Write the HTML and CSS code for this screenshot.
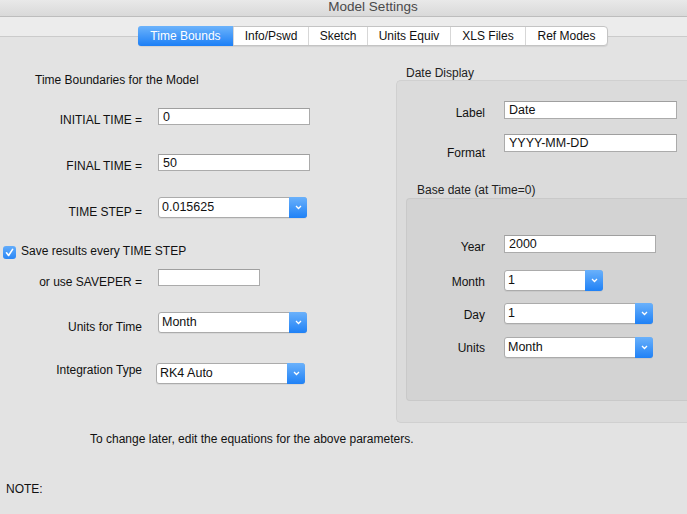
FILE: index.html
```html
<!DOCTYPE html>
<html>
<head>
<meta charset="utf-8">
<title>Model Settings</title>
<link rel="stylesheet" href="styles.css">
</head>
<body>
<div class="window">
  <div class="titlebar">Model Settings</div>
  <div class="tabbar">
    <div class="tabs">
      <div class="tab active t1">Time Bounds</div>
      <div class="tab t2">Info/Pswd</div>
      <div class="tab t3">Sketch</div>
      <div class="tab t4">Units Equiv</div>
      <div class="tab t5">XLS Files</div>
      <div class="tab t6">Ref Modes</div>
    </div>
  </div>
  <div class="content">
    <div class="columns">
      <div class="left">
        <div class="heading">Time Boundaries for the Model</div>
        <div class="row r1"><div class="lbl p4">INITIAL TIME =</div><div class="field w152">0</div></div>
        <div class="row r2"><div class="lbl p4">FINAL TIME =</div><div class="field w152">50</div></div>
        <div class="row r3"><div class="lbl p7">TIME STEP =</div>
          <div class="select w149"><span class="val">0.015625</span><span class="btn"><svg width="7" height="5" viewBox="0 0 7 5"><polyline points="1,1 3.5,3.5 6,1" fill="none" stroke="#fff" stroke-width="1.3"/></svg></span></div>
        </div>
        <div class="check-row">
          <span class="checkbox"><svg width="13" height="13" viewBox="0 0 13 13"><polyline points="3.5,6.8 5.6,9.5 9.6,3.4" fill="none" stroke="#fff" stroke-width="1.6" stroke-linecap="round" stroke-linejoin="round"/></svg></span>
          <span>Save results every TIME STEP</span>
        </div>
        <div class="row r5"><div class="lbl p5">or use SAVEPER =</div><div class="field w102"></div></div>
        <div class="row r6"><div class="lbl p7">Units for Time</div>
          <div class="select w149"><span class="val">Month</span><span class="btn"><svg width="7" height="5" viewBox="0 0 7 5"><polyline points="1,1 3.5,3.5 6,1" fill="none" stroke="#fff" stroke-width="1.3"/></svg></span></div>
        </div>
        <div class="row r7"><div class="lbl">Integration Type</div>
          <div class="select w149 integ"><span class="val">RK4 Auto</span><span class="btn"><svg width="7" height="5" viewBox="0 0 7 5"><polyline points="1,1 3.5,3.5 6,1" fill="none" stroke="#fff" stroke-width="1.3"/></svg></span></div>
        </div>
      </div>
      <div class="right">
        <div class="group-title">Date Display</div>
        <div class="group">
          <div class="rrow rr1"><div class="rlbl p4">Label</div><div class="field rfield w173">Date</div></div>
          <div class="rrow rr2"><div class="rlbl p11">Format</div><div class="field rfield w173">YYYY-MM-DD</div></div>
          <div class="sub-title">Base date (at Time=0)</div>
          <div class="subgroup">
            <div class="rrow sr1"><div class="slbl p4">Year</div><div class="field rfield w151">2000</div></div>
            <div class="rrow sr2"><div class="slbl p4">Month</div>
              <div class="select w98"><span class="val">1</span><span class="btn"><svg width="7" height="5" viewBox="0 0 7 5"><polyline points="1,1 3.5,3.5 6,1" fill="none" stroke="#fff" stroke-width="1.3"/></svg></span></div>
            </div>
            <div class="rrow sr3"><div class="slbl p4">Day</div>
              <div class="select w148"><span class="val">1</span><span class="btn"><svg width="7" height="5" viewBox="0 0 7 5"><polyline points="1,1 3.5,3.5 6,1" fill="none" stroke="#fff" stroke-width="1.3"/></svg></span></div>
            </div>
            <div class="rrow sr4"><div class="slbl p3">Units</div>
              <div class="select w148"><span class="val">Month</span><span class="btn"><svg width="7" height="5" viewBox="0 0 7 5"><polyline points="1,1 3.5,3.5 6,1" fill="none" stroke="#fff" stroke-width="1.3"/></svg></span></div>
            </div>
          </div>
        </div>
      </div>
    </div>
    <div class="hint">To change later, edit the equations for the above parameters.</div>
    <div class="note">NOTE:</div>
  </div>
</div>
</body>
</html>
```
FILE: styles.css
```css
html, body {
  margin: 0;
  padding: 0;
}
body {
  width: 687px;
  height: 514px;
  overflow: hidden;
  background: #e3e3e3;
  font-family: "Liberation Sans", Arial, sans-serif;
  font-size: 12px;
  color: #111;
}
.window {
  width: 687px;
  height: 514px;
  overflow: hidden;
}
.titlebar {
  height: 16px;
  border-bottom: 1px solid #bdbdbd;
  background: linear-gradient(#e9e9e9, #d9d9d9);
  padding-left: 59px;
  text-align: center;
  font-size: 13.5px;
  line-height: 14px;
  color: #4a4a4a;
}
.tabbar {
  height: 29px;
  box-sizing: border-box;
  padding-top: 9px;
  background: linear-gradient(to bottom, #ececec 0, #ececec 19px, #cbcbcb 19px, #cbcbcb 20px, #e3e3e3 20px);
}
.tabs {
  display: flex;
  width: max-content;
  margin-left: 138px;
  height: 20px;
  box-sizing: border-box;
  border: 1px solid #c4c4c4;
  border-radius: 4px;
  background: #fff;
  box-shadow: 0 1px 1px rgba(0, 0, 0, 0.08);
}
.tab {
  text-align: center;
  line-height: 18px;
  border-left: 1px solid #d7d7d7;
  color: #111;
}
.tab.active {
  background: linear-gradient(#6cb3fb, #1c7ff6);
  color: #fff;
  border-left: none;
  border-radius: 3px 0 0 3px;
  margin: -1px 0 -1px -1px;
  line-height: 20px;
}
.t1 { width: 95px; }
.t2 { width: 74px; }
.t3 { width: 58px; }
.t4 { width: 82px; }
.t5 { width: 74px; }
.t6 { width: 81px; }

.columns {
  display: flex;
}
.left {
  width: 396px;
  flex: none;
  display: flex;
  flex-direction: column;
}
.heading {
  margin-top: 26px;
  padding-left: 35px;
  line-height: 16px;
}
.row {
  display: flex;
  align-items: flex-start;
}
.lbl {
  width: 142px;
  text-align: right;
  line-height: 16px;
  margin-right: 16px;
}
.p3 { padding-top: 3px; }
.p4 { padding-top: 4px; }
.p5 { padding-top: 5px; }
.p7 { padding-top: 7px; }
.p11 { padding-top: 11px; }
.r1 { margin-top: 20px; }
.r2 { margin-top: 26px; }
.r3 { margin-top: 23px; }
.r5 { margin-top: 10px; }
.r6 { margin-top: 22px; }
.r7 { margin-top: 27px; }
.r7 .lbl { margin-right: 14px; width: 142px; }
.r7 .select { margin-top: 1px; }

.field {
  height: 17px;
  box-sizing: border-box;
  border: 1px solid #ababab;
  border-top-color: #9f9f9f;
  background: #fff;
  padding-left: 4px;
  line-height: 16px;
  font-size: 12.5px;
}
.rfield { height: 18px; }
.w152 { width: 152px; }
.w149 { width: 149px; }
.w102 { width: 102px; }
.w173 { width: 173px; }
.w151 { width: 152px; }
.w148 { width: 149px; }
.w98 { width: 99px; }

.select {
  display: flex;
  height: 21px;
  box-sizing: border-box;
  border: 1px solid #ababab;
  border-radius: 3px;
  background: #fff;
  box-shadow: 0 1px 0 rgba(0, 0, 0, 0.05);
}
.select .val {
  flex: 1;
  padding-left: 3px;
  line-height: 19px;
  font-size: 12.5px;
}
.select .btn {
  width: 18px;
  margin: -1px -1px -1px 0;
  background: linear-gradient(#6ab1fb, #1f81f6);
  border-radius: 0 3px 3px 0;
  display: flex;
  align-items: center;
  justify-content: center;
}

.check-row {
  margin-top: 23px;
  display: flex;
  align-items: center;
  height: 16px;
  padding-left: 3px;
  line-height: 16px;
}
.checkbox {
  width: 13px;
  height: 13px;
  margin-top: 2px;
  margin-right: 5px;
  border-radius: 3px;
  background: linear-gradient(#62acfb, #2a87f6);
  display: flex;
}

.right {
  width: 330px;
  flex: none;
}
.group-title {
  margin-top: 20px;
  padding-left: 10px;
  line-height: 14px;
  color: #222;
}
.group {
  border: 1px solid #d0d0d0;
  border-right: none;
  border-radius: 5px 0 0 5px;
  background: #dbdbdb;
  padding-top: 20px;
  padding-bottom: 21px;
}
.rrow {
  display: flex;
  align-items: flex-start;
}
.rlbl {
  width: 88px;
  text-align: right;
  line-height: 16px;
  margin-right: 19px;
}
.rr2 { margin-top: 13px; }
.sub-title {
  margin-top: 22px;
  padding-left: 20px;
  line-height: 14px;
  color: #222;
}
.subgroup {
  margin-top: 1px;
  margin-left: 9px;
  border: 1px solid #c9c9c9;
  border-right: none;
  border-radius: 4px 0 0 4px;
  background: #d3d3d3;
  padding-top: 36px;
  padding-bottom: 42px;
}
.slbl {
  width: 78px;
  text-align: right;
  line-height: 16px;
  margin-right: 19px;
}
.sr2 { margin-top: 15px; }
.sr3 { margin-top: 12px; }
.sr4 { margin-top: 13px; }

.hint {
  margin-top: 8px;
  padding-left: 90px;
  line-height: 16px;
}
.note {
  margin-top: 34px;
  padding-left: 6px;
  line-height: 16px;
}
```
